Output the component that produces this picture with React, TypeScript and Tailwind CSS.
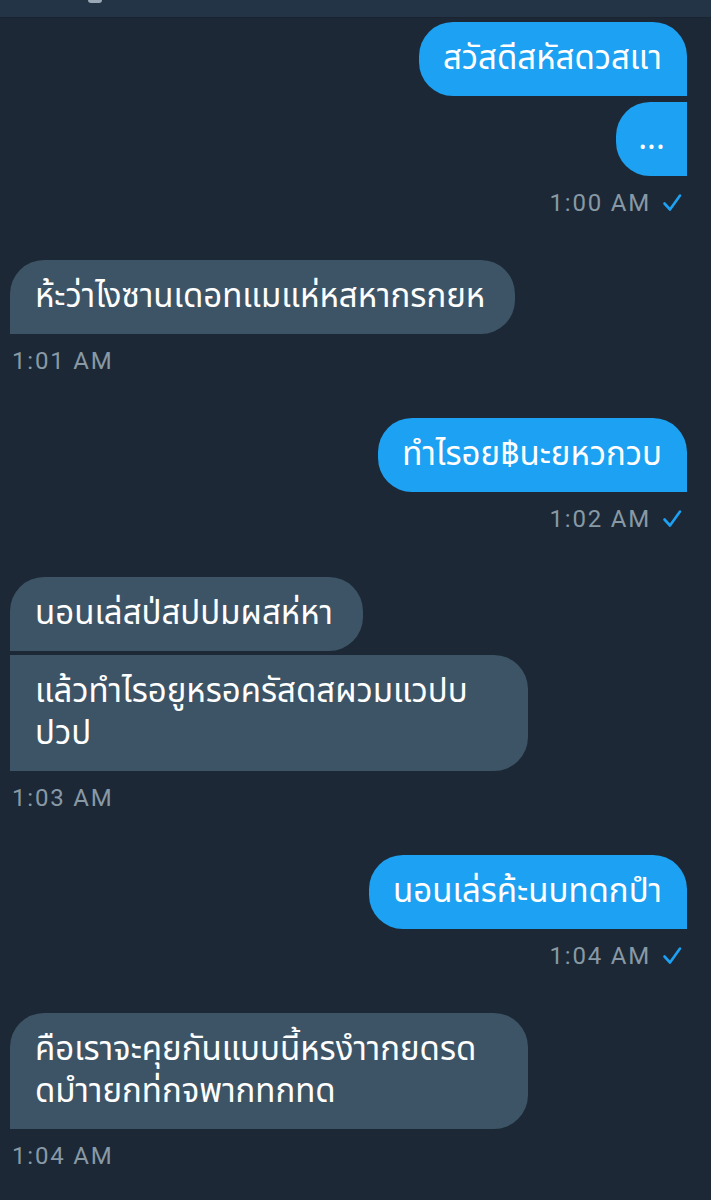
import React from "react";

const thai = { fontFamily: '"Noto Sans Thai", "Noto Sans", "DejaVu Sans", sans-serif' };
const ts = { fontFamily: 'Roboto, "Liberation Sans", sans-serif' };

function Check() {
  return (
    <svg width="20" height="20" viewBox="0 0 20 20" className="ml-[11px] mr-[5px]">
      <path d="M2.5 10.5 L8 16.5 L18 2.5" fill="none" stroke="#1da1f2" strokeWidth="2.6" strokeLinecap="round" strokeLinejoin="round" />
    </svg>
  );
}

function Sent({ children, className = "" }: { children: React.ReactNode; className?: string }) {
  return (
    <div
      className={`self-end bg-[#1da1f2] text-white text-[33px] leading-[42px] py-4 pl-6 pr-[25px] rounded-l-[34px] whitespace-nowrap ${className}`}
      style={thai}
    >
      {children}
    </div>
  );
}

function Recv({ children, className = "" }: { children: React.ReactNode; className?: string }) {
  return (
    <div
      className={`self-start bg-[#3d5466] text-white text-[33px] leading-[42px] py-4 pl-[25px] pr-[30px] rounded-r-[34px] whitespace-nowrap ${className}`}
      style={thai}
    >
      {children}
    </div>
  );
}

function SentTime({ t }: { t: string }) {
  return (
    <div className="self-end flex items-center mt-[13px] text-[#8899a6] text-[24px] leading-[28px] tracking-[1.8px]" style={ts}>
      <span>{t}</span>
      <Check />
    </div>
  );
}

function RecvTime({ t }: { t: string }) {
  return (
    <div className="self-start ml-[2px] mt-[13px] text-[#8899a6] text-[24px] leading-[28px] tracking-[1.8px]" style={ts}>
      {t}
    </div>
  );
}

export default function App() {
  return (
    <div className="w-[711px] h-[1200px] bg-[#1c2835] overflow-hidden flex flex-col">
      <div className="h-[18px] bg-[#243447] border-b border-[#1a2430] flex">
        <div className="ml-[88px] w-[14px] h-[3px] rounded-b-full bg-[#9aa7b4]" />
      </div>
      <div className="flex flex-col px-[10px] pr-[24px] pt-[4px]">
        <Sent className="rounded-tr-[34px]">สวัสดีสหัสดวสแา</Sent>
        <Sent className="mt-[6px] w-[71px] !px-0 text-center">...</Sent>
        <SentTime t="1:00 AM" />

        <Recv className="mt-[43px] rounded-tl-[34px]">ห้ะว่าไงซานเดอทแมแห่หสหากรกยห</Recv>
        <RecvTime t="1:01 AM" />

        <Sent className="mt-[43px] rounded-tr-[34px]">ทำไรอย฿นะยหวกวบ</Sent>
        <SentTime t="1:02 AM" />

        <Recv className="mt-[44px] rounded-tl-[34px]">นอนเล่สป่สปปมผสห่หา</Recv>
        <Recv className="mt-[4px] w-[518px]">
          แล้วทำไรอยูหรอครัสดสผวมแวปบ
          <br />
          ปวป
        </Recv>
        <RecvTime t="1:03 AM" />

        <Sent className="mt-[43px] rounded-tr-[34px]">นอนเล่รค้ะนบทดกปำ</Sent>
        <SentTime t="1:04 AM" />

        <Recv className="mt-[43px] rounded-tl-[34px] w-[518px]">
          คือเราจะคุยกันแบบนี้หรงำากยดรด
          <br />
          ดมำายกท่กจพากทกทด
        </Recv>
        <RecvTime t="1:04 AM" />
      </div>
    </div>
  );
}
